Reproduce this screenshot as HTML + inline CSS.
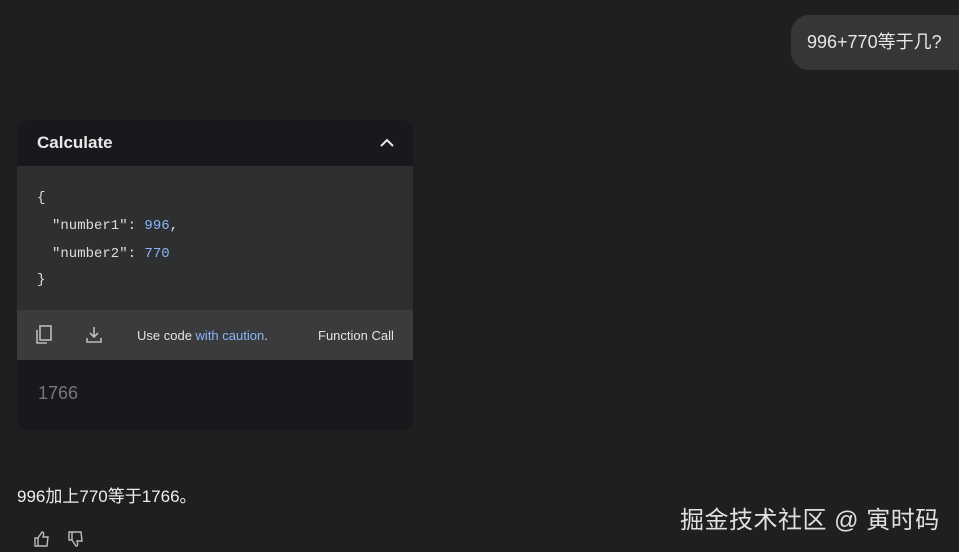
<!DOCTYPE html>
<html><head><meta charset="utf-8"><style>
body{margin:0;width:959px;height:552px;background:#1f1f1f;position:relative;overflow:hidden;font-family:"Liberation Sans","Noto Sans CJK SC",sans-serif;color:#e3e3e3}
.bub{position:absolute;left:791px;top:15px;width:190px;height:55px;background:#353638;border-radius:18px;font-size:18px;line-height:55px;padding-left:16px;box-sizing:border-box;color:#e6e6e6}
.card{position:absolute;left:17px;top:120px;width:396px;height:310px;background:#18191c;border-radius:10px;overflow:hidden}
.hd{height:46px;font-size:17px;font-weight:bold;line-height:46px;padding-left:20px;color:#e8e8e8}
.code{position:absolute;top:46px;left:0;width:396px;height:144px;background:#2e2f31;font-family:"Liberation Mono","Noto Sans CJK SC",monospace;font-size:14px;color:#ddd}
.code div{position:absolute;left:20px}
.n{color:#8ab4f8}
.ft{position:absolute;top:190px;left:0;width:396px;height:50px;background:#3a3b3d;font-size:13px;color:#e3e3e3}
.res{position:absolute;top:263px;left:21px;font-size:18px;color:#777;font-family:"Liberation Sans",sans-serif}
</style></head><body>
<div class="bub">996+770等于几?</div>
<div class="card">
<div class="hd">Calculate</div>
<svg style="position:absolute;left:362px;top:17px" width="16" height="12"><path d="M2 9 L8 3 L14 9" stroke="#e8e8e8" stroke-width="2" fill="none"/></svg>
<div class="code">
<div style="top:24px">{</div>
<div style="top:52px;left:35px">"number1": <span class="n">996</span>,</div>
<div style="top:80px;left:35px">"number2": <span class="n">770</span></div>
<div style="top:106px">}</div>
</div>
<div class="ft">
<svg style="position:absolute;left:17px;top:14px" width="20" height="22"><rect x="6" y="2" width="11" height="14" fill="none" stroke="#bbb" stroke-width="1.6"/><path d="M3 6 V19 H13" fill="none" stroke="#bbb" stroke-width="1.6"/></svg>
<svg style="position:absolute;left:67px;top:15px" width="20" height="20"><path d="M10 2 V12 M6 8 L10 12 L14 8 M3 13 V17 H17 V13" fill="none" stroke="#bbb" stroke-width="1.6"/></svg>
<span style="position:absolute;left:120px;top:18px">Use code <span style="color:#8ab4f8">with caution</span>.</span>
<span style="position:absolute;left:301px;top:18px">Function Call</span>
</div>
<div class="res">1766</div>
</div>
<div style="position:absolute;left:17px;top:482px;font-size:17px;color:#eee">996加上770等于1766。</div>
<svg style="position:absolute;left:33px;top:530px" width="18" height="18"><path d="M2 8 H5 V16 H2 Z M5 8 L9 2 C11 2 11 4 10 7 H15 L14 16 H5" fill="none" stroke="#bbb" stroke-width="1.4"/></svg>
<svg style="position:absolute;left:67px;top:530px" width="18" height="18"><path d="M2 2 H5 V10 H2 Z M5 10 L9 16 C11 16 11 14 10 11 H15 L14 2 H5" fill="none" stroke="#bbb" stroke-width="1.4"/></svg>
<div style="position:absolute;left:680px;top:500px;font-size:24px;letter-spacing:0.5px;color:#e0e0e0">掘金技术社区 @ 寅时码</div>
</body></html>
